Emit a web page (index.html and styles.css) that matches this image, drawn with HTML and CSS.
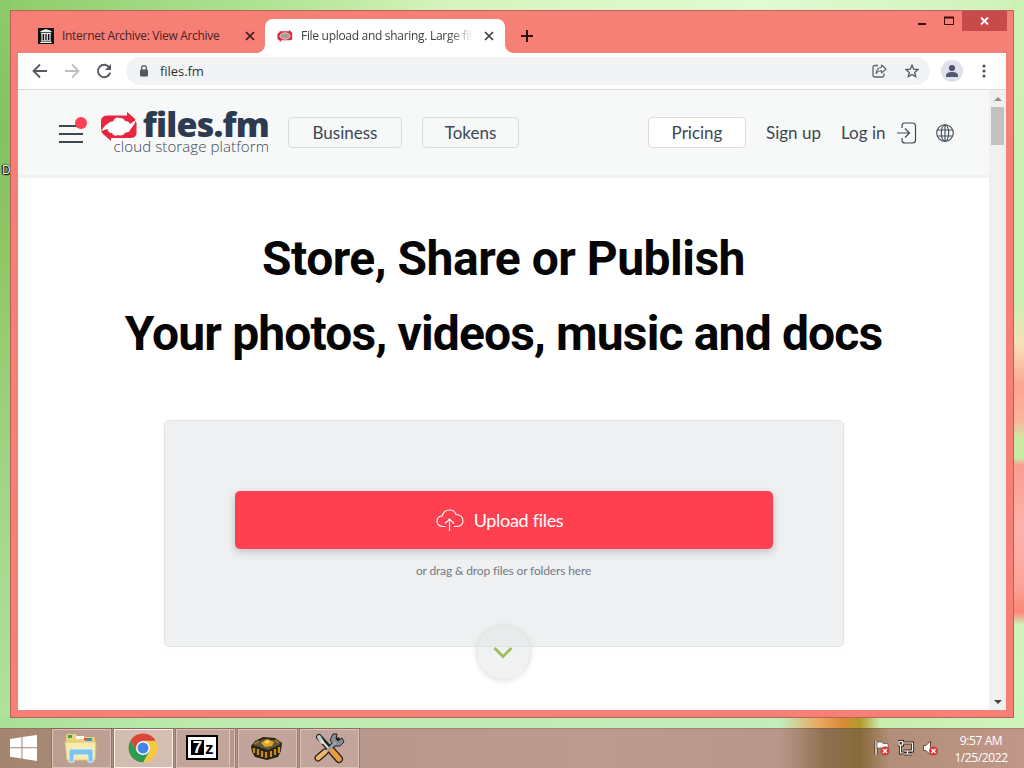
FILE: index.html
```
<!DOCTYPE html>
<html lang="en">
<head>
  <meta charset="UTF-8">
  <title>File upload and sharing</title>
  <link rel="stylesheet" href="styles.css">
</head>
<body>
  <span class="desktop-label">D</span>

  <div class="window">
    <div class="titlebar">
      <div class="tab">
        <svg class="favicon" width="16" height="16" viewBox="0 0 16 16">
          <rect width="16" height="16" fill="#111"/>
          <path d="M8 1l5.5 2v1.3h-11V3zM3 5h10v1H3zM3 12.3h10v1H3zM2.3 13.8h11.4v1.2H2.3z" fill="#eee"/>
          <path d="M4 6v6.3M6.7 6v6.3M9.3 6v6.3M12 6v6.3" stroke="#ddd" stroke-width="1.3"/>
        </svg>
        <span class="tab-title">Internet Archive: View Archive</span>
        <svg class="tab-close" width="10" height="10" viewBox="0 0 10 10"><path d="M1 1l8 8M9 1l-8 8" stroke="#3b1a18" stroke-width="1.7"/></svg>
      </div>
      <div class="tab active">
        <svg class="favicon" width="16" height="16" viewBox="0 0 38 32">
          <path d="M5 8Q5 5 9 5h20V1l7 7v14q0 4-4 4H10v4l-9-7V12q0-4 4-4z" fill="#d92b40"/>
          <ellipse cx="19" cy="16" rx="12" ry="7.5" fill="#a89d94" stroke="#f3d5d5" stroke-width="2"/>
        </svg>
        <span class="tab-title faded">File upload and sharing. Large fil</span>
        <svg class="tab-close" width="10" height="10" viewBox="0 0 10 10"><path d="M1 1l8 8M9 1l-8 8" stroke="#3c4043" stroke-width="1.7"/></svg>
      </div>
      <svg class="new-tab" width="12" height="12" viewBox="0 0 12 12"><path d="M6 0v12M0 6h12" stroke="#2e0f0d" stroke-width="2"/></svg>
      <div class="controls">
        <svg class="minimize" width="9" height="10" viewBox="0 0 9 10"><path d="M0 8h8" stroke="#3c0b08" stroke-width="2"/></svg>
        <svg class="maximize" width="10" height="10" viewBox="0 0 10 10"><path d="M.5 1v7.5h9V1" fill="none" stroke="#3c0b08"/><path d="M0 1.5h10" stroke="#3c0b08" stroke-width="2"/></svg>
        <span class="close">
          <svg width="9" height="8" viewBox="0 0 9 8"><path d="M1 .5l7 7M8 .5l-7 7" stroke="#fff" stroke-width="1.8"/></svg>
        </span>
      </div>
    </div>

    <div class="toolbar">
      <svg class="back" width="16" height="16" viewBox="0 0 16 16"><path d="M15 8H2M8 1.5L1.5 8 8 14.5" fill="none" stroke="#55585c" stroke-width="1.8"/></svg>
      <svg class="forward" width="16" height="16" viewBox="0 0 16 16"><path d="M1 8h13M8 1.5L14.5 8 8 14.5" fill="none" stroke="#bdbfc2" stroke-width="1.8"/></svg>
      <svg class="reload" width="16" height="16" viewBox="0 0 16 16"><path d="M13.3 4.5A6.2 6.2 0 1 0 14.2 9.5" fill="none" stroke="#55585c" stroke-width="1.9"/><path d="M15 1v6H9z" fill="#55585c"/></svg>
      <div class="address">
        <svg width="10" height="12" viewBox="0 0 10 12"><rect x="1" y="4.5" width="8" height="7" rx="1" fill="#55585c"/><path d="M2.7 5V3a2.3 2.3 0 0 1 4.6 0v2" fill="none" stroke="#55585c" stroke-width="1.3"/></svg>
        <span class="url">files.fm</span>
        <svg class="share" width="15" height="14" viewBox="0 0 15 14"><path d="M6 1.5H3Q1 1.5 1 3.5V11q0 2 2 2h7q2 0 2-2V9.5" fill="none" stroke="#606367" stroke-width="1.3"/><path d="M9.5 1l4.5 4-4.5 4V6.8Q5.8 6.7 4.2 9.5 4.5 4 9.5 3.3z" fill="none" stroke="#606367" stroke-width="1.1" stroke-linejoin="round"/></svg>
        <svg class="star" width="14" height="14" viewBox="0 0 14 14"><path d="M7 1.3l1.7 3.9 4.2.4-3.2 2.8 1 4.2L7 10.4l-3.7 2.2 1-4.2L1.1 5.6l4.2-.4z" fill="none" stroke="#55585c" stroke-width="1.3"/></svg>
      </div>
      <svg class="avatar" width="22" height="22" viewBox="0 0 22 22"><circle cx="11" cy="11" r="11" fill="#dfe1ec"/><circle cx="11" cy="8" r="3.1" fill="#50566b"/><path d="M5 17v-1.5Q5 12 11 12t6 3.5V17z" fill="#50566b"/></svg>
      <svg class="more" width="4" height="14" viewBox="0 0 4 14"><g fill="#505357"><circle cx="2" cy="2" r="1.6"/><circle cx="2" cy="7" r="1.6"/><circle cx="2" cy="12" r="1.6"/></g></svg>
    </div>

    <div class="viewport">
      <div class="page">
        <header class="header">
          <div class="menu">
            <i></i><i></i><i></i>
            <b class="menu-dot"></b>
          </div>
          <div class="logo">
            <svg class="logo-mark" width="38" height="30" viewBox="0 0 38 30">
              <path d="M8 3.5h19V0l7 6q2.5 2 2.5 5v10q0 5-6 5H11V29l-8-7Q1 20 1 17V9q0-5.500 7-5.500z" fill="#e8263f"/>
              <path d="M1 19q4-6 6.5-7 2-3 5.5-2.5Q15.5 4 20 6q4 0 5 3 4 0 5 3l6.5-4.5Q33 15 30.5 17q-1 4-5 3.5-3 4.500-7.500 2.500-4.500 2-6-2-4 0-4.500-4z" fill="#fff"/>
            </svg>
            <div class="logo-text">
              <span class="logo-name">files.fm</span>
              <span class="logo-tagline">cloud storage platform</span>
            </div>
          </div>
          <a class="button business">Business</a>
          <a class="button tokens">Tokens</a>
          <a class="button pricing">Pricing</a>
          <a class="link signup">Sign up</a>
          <a class="link login">Log in</a>
          <svg class="login-icon" width="20" height="22" viewBox="0 0 20 22"><path d="M5 6V4q0-3 3-3h7.5q3 0 3 3v14q0 3-3 3H8q-3 0-3-3v-2M0 11h12M8 6.5l4.5 4.5L8 15.5" fill="none" stroke="#3d4956" stroke-width="1.2"/></svg>
          <svg class="globe" width="18" height="18" viewBox="0 0 18 18"><g fill="none" stroke="#3d4956" stroke-width="1.1"><circle cx="9" cy="9" r="8.3"/><ellipse cx="9" cy="9" rx="3.7" ry="8.3"/><path d="M9 1v16M1.5 6h15M1.5 12h15"/></g></svg>
        </header>

        <main class="hero">
          <h1><span class="line-1">Store, Share or Publish</span><br><span class="line-2">Your photos, videos, music and docs</span></h1>
          <section class="dropzone">
            <a class="upload">
              <svg width="28" height="23" viewBox="0 0 28 23"><path d="M9.5 17.5H7Q1 17 1 12q0-4.500 5-5Q8 1 13.500 1q5 0 6.500 4.500 7 .5 7 6.500 0 5-6 5.500h-3M13.500 22V10M9 14.500l4.500-4.500 4.500 4.500" fill="none" stroke="#fff" stroke-width="1.1"/></svg>
              <span>Upload files</span>
            </a>
            <p class="hint">or drag &amp; drop files or folders here</p>
            <div class="more-circle">
              <svg width="20" height="13" viewBox="0 0 20 13"><path d="M1.5 2L10 10.5 18.5 2" fill="none" stroke="#9dc158" stroke-width="3"/></svg>
            </div>
          </section>
        </main>
      </div>
      <div class="scrollbar">
        <i class="arrow-up"></i>
        <i class="thumb"></i>
        <i class="arrow-down"></i>
      </div>
    </div>
  </div>

  <footer class="taskbar">
    <div class="start">
      <svg width="28" height="26" viewBox="0 0 28 26"><path d="M0 4l11.5-1.7v10H0zM12.5 2.1L27 0v12.3H12.5zM0 13.3h11.5v10.2L0 21.8zM12.5 13.3H27V26l-14.5-2.3z" fill="#fff"/></svg>
    </div>
    <div class="task">
      <svg width="34" height="30" viewBox="0 0 34 30">
        <path d="M2 3q0-2 2-2h8l2 3h15q2 0 2 2v20H2z" fill="#e8d27a"/>
        <path d="M4 2h4v3H4z" fill="#4aa14c"/><path d="M12 3h8v3h-8z" fill="#fff"/><path d="M21 5h7v3h-7z" fill="#4b8ed0"/><path d="M20 5h3v2h-3z" fill="#d55c43"/>
        <path d="M1 9h31l-1 18H3z" fill="#f7ebab" stroke="#dcc973"/>
        <path d="M5 29V18q0-2 2-2h20q2 0 2 2v11h-5v-7H10v7z" fill="#7fc3ed" stroke="#d9f0fb"/>
      </svg>
    </div>
    <div class="task current">
      <svg width="30" height="30" viewBox="0 0 30 30">
        <circle cx="15" cy="15" r="14.5" fill="#f7c844"/>
        <path d="M2.4 7.8A14.5 14.5 0 0 1 27.6 7.8H15L8.8 18.6z" fill="#d8473a"/>
        <path d="M2.4 7.8A14.5 14.5 0 0 0 15 29.5l6.300-10.900H8.700z" fill="#2f9a55"/>
        <circle cx="15" cy="15" r="7" fill="#fff"/><circle cx="15" cy="15" r="5.5" fill="#4386e8"/>
      </svg>
    </div>
    <div class="task stacked">
      <div class="sevenzip"><b>7</b><span>z</span></div>
    </div>
    <div class="task">
      <svg width="34" height="26" viewBox="0 0 34 26">
        <path d="M1 11L5 6l8-4 12 1 7 5-1 8-3 6-11 3-12-3-3-5z" fill="#2b2416"/>
        <path d="M3 10l10-6 12 1 6 4-13 6z" fill="#5d5540"/>
        <path d="M4 13v5M8 14v6M12 16v6M16 17v6M21 16v6M25 14v6M29 12v6" stroke="#c98a1a" stroke-width="2.2"/>
        <path d="M11 8l6-4 7 3-2 4-7 1z" fill="#e7a321"/><path d="M14 7l4-2 2 2-3 2z" fill="#ffd85e"/>
        <path d="M4 9l5-3M25 5l4 3" stroke="#9c7a2a" stroke-width="2"/>
      </svg>
    </div>
    <div class="task">
      <svg width="32" height="32" viewBox="0 0 32 32">
        <g fill="none" stroke="#222" stroke-linecap="round"><path d="M6 5l11 12" stroke-width="6"/><path d="M18 18l8 9" stroke-width="8"/><path d="M25 8L14 19" stroke-width="5"/><path d="M12 20l-7 6" stroke-width="7"/></g>
        <path d="M20 2l-3 6 4 6h6l4-4-2-4-4 3-2-2 1-5z" fill="#858d96" stroke="#222"/>
        <g fill="none" stroke-linecap="round"><path d="M6 5l3 5" stroke="#bfcbc8" stroke-width="4"/><path d="M9 9l8 9" stroke="#ddd" stroke-width="2"/><path d="M19 19l7 8" stroke="#e99b43" stroke-width="5.5"/><path d="M22 11l-8 8" stroke="#99a1aa" stroke-width="3"/><path d="M12 20l-7 6" stroke="#f0b568" stroke-width="4.5"/></g>
      </svg>
    </div>
    <div class="tray">
      <svg width="16" height="16" viewBox="0 0 16 16"><path d="M2 1v14" stroke="#40241b" stroke-width="3"/><path d="M2 1v14" stroke="#fff" stroke-width="1.4"/><path d="M3 2h5l1 1.5h5V9H9L8 8H3z" fill="#fff" stroke="#65483c" stroke-width=".7"/><circle cx="11" cy="11" r="4.5" fill="#cf3c39"/><path d="M9 9l4 4M13 9l-4 4" stroke="#fff" stroke-width="1.4"/></svg>
      <svg width="16" height="16" viewBox="0 0 16 16"><path d="M4.5 3h10v8h-9M9.5 11v3M6 14h8M2.5 5v8h3M1 1.5h3.5V5H1z" fill="none" stroke="#40241b" stroke-width="3"/><path d="M4.5 3h10v8h-9M9.5 11v3M6 14h8M2.5 5v8h3M1 1.5h3.5V5H1z" fill="none" stroke="#fff" stroke-width="1.2"/></svg>
      <svg width="16" height="16" viewBox="0 0 16 16"><path d="M1.5 5.5H4L8.5 1v14L4 10.5H1.5z" fill="#fff" stroke="#65483c"/><circle cx="11.5" cy="11" r="4.5" fill="#cf3c39"/><path d="M9.5 9l4 4M13.5 9l-4 4" stroke="#fff" stroke-width="1.4"/></svg>
    </div>
    <div class="clock"><span class="time">9:57 AM</span><span class="date">1/25/2022</span></div>
  </footer>
</body>
</html>
```
FILE: styles.css
```
* {
  box-sizing: border-box;
}

body {
  margin: 0;
  width: 1024px;
  height: 768px;
  overflow: hidden;
  display: flex;
  flex-direction: column;
  position: relative;
  font-family: "Open Sans", sans-serif;
  background:
    linear-gradient(to bottom, #cdf0b5 0, #c9efb4 300px, #f8dfb8 345px, #fba493 385px, #fbb59a 420px, #c8eca5 440px, #c8eca5 458px, #fa9e90 465px, #fdb3aa 530px, #fca49b 585px, #fa8675 612px, #d0f3bb 625px, #cdf5bd 768px) right / 12px 768px no-repeat,
    linear-gradient(to right, #a8e098 0, #bdebae 200px, #c2eebd 780px, #e9a65e 820px, #d78a37 843px, #b09b27 860px, #c9edae 880px, #cdf5bd 1024px) 0 716px / 1024px 12px no-repeat,
    linear-gradient(to bottom, #8dcc69 0, #83c261 130px, #91c765 260px, #a3d687 500px, #b0e69f 768px) left / 11px 768px no-repeat,
    linear-gradient(to right, #8dcc69 0, #b5e69a 300px, #d6f4bd 450px, #e1fad2 760px, #cef2b9 1024px);
}

svg,
i,
b {
  display: block;
  flex: none;
}

/* label of an icon hidden behind the window */
.desktop-label {
  position: absolute;
  left: 2px;
  top: 162px;
  font-size: 12px;
  line-height: 16px;
  color: #fff;
  text-shadow: 0 0 1px #000, 1px 1px 1px #000, -1px 0 1px #000, 0 0 2px #000;
}

.window {
  position: relative;
  width: 1004px;
  height: 708px;
  margin-left: 10px;
  margin-top: 10px;
  padding: 0 7px 7px;
  border: 1px solid #b9605a;
  background: #f67f76;
  flex: none;
}

.titlebar {
  display: flex;
  height: 42px;
  align-items: flex-end;
  padding-left: 8px;
}

.tab {
  display: flex;
  align-items: center;
  width: 239px;
  height: 34px;
  padding: 0 10px 0 12px;
  font-size: 12px;
  color: #4c211f;
}

.tab.active {
  position: relative;
  width: 240px;
  padding-right: 11px;
  background: #fff;
  border-radius: 8px 8px 0 0;
  color: #3c4043;
}

.tab.active::before,
.tab.active::after {
  content: "";
  position: absolute;
  bottom: 0;
  width: 8px;
  height: 8px;
}

.tab.active::before {
  left: -8px;
  background: radial-gradient(circle at 0 0, transparent 7.5px, #fff 8px);
}

.tab.active::after {
  right: -8px;
  background: radial-gradient(circle at 100% 0, transparent 7.5px, #fff 8px);
}

.tab-title {
  flex: 1;
  margin: -1px 10px 0 8px;
  white-space: nowrap;
  overflow: hidden;
  letter-spacing: -.3px;
}

.tab-title.faded {
  -webkit-mask-image: linear-gradient(to right, #000 85%, transparent);
  mask-image: linear-gradient(to right, #000 85%, transparent);
}

.new-tab {
  margin: 0 0 11px 16px;
}

.controls {
  display: flex;
  align-self: flex-start;
  margin-left: auto;
  margin-right: -1px;
}

.minimize {
  margin: 5px 17px 0 0;
}

.maximize {
  margin: 5px 8px 0 0;
}

.close {
  display: flex;
  align-items: center;
  justify-content: center;
  width: 45px;
  height: 20px;
  background: #c84b4c;
}

.toolbar {
  display: flex;
  align-items: center;
  height: 37px;
  padding: 0 20px 0 14px;
  background: #fff;
  border-bottom: 1px solid #d8dadc;
}

.forward {
  margin: 0 16px;
}

.address {
  display: flex;
  align-items: center;
  width: 804px;
  height: 28px;
  margin-left: 13px;
  padding: 0 11px 0 13px;
  border-radius: 14px;
  background: #f1f3f4;
}

.reload {
  margin-right: 1px;
}

.url {
  margin-left: 11px;
  font-size: 13px;
  letter-spacing: -.05px;
  color: #333;
}

.share {
  margin-left: auto;
}

.star {
  margin-left: 18px;
}

.avatar {
  margin-left: 11px;
}

.more {
  margin-left: auto;
}

.viewport {
  display: flex;
  height: 620px;
  background: #fff;
}

.page {
  width: 971px;
}

.scrollbar {
  display: flex;
  flex-direction: column;
  align-items: center;
  width: 17px;
  padding: 7px 0 6px;
  background: #f0f0f0;
}

.arrow-up {
  border: 4px solid transparent;
  border-top: 0;
  border-bottom-color: #8d8d8d;
}

.thumb {
  width: 13px;
  height: 38px;
  margin-top: 6px;
  background: #c1c1c1;
}

.arrow-down {
  margin-top: auto;
  border: 4px solid transparent;
  border-bottom: 0;
  border-top-color: #444;
}

.header {
  display: flex;
  align-items: center;
  height: 88px;
  padding: 0 35px 0 41px;
  background: #f7f8f8;
  border-bottom: 3px solid #f0f1f1;
  font-family: Lato, sans-serif;
  color: #3b4754;
}

.menu {
  position: relative;
  width: 24px;
  height: 18px;
  margin-top: 3px;
  display: flex;
  flex-direction: column;
  justify-content: space-between;
}

.menu i {
  height: 2px;
  background: #3b4754;
}

.menu-dot {
  position: absolute;
  right: -4px;
  top: -8px;
  width: 12px;
  height: 12px;
  border-radius: 50%;
  background: #fb4056;
}

.logo {
  display: flex;
  width: 169px;
  height: 54px;
  margin-left: 17px;
  padding-top: 6px;
}

.logo-text {
  display: flex;
  flex-direction: column;
  align-items: flex-end;
  width: 131px;
  height: 50px;
  margin-top: -3px;
  white-space: nowrap;
}

.logo-name {
  font: 800 34px/30px "Open Sans", sans-serif;
  letter-spacing: -.8px;
  color: #2c3b50;
}

.logo-tagline {
  font: 300 15px/15px "Open Sans", sans-serif;
  letter-spacing: .1px;
}

.button {
  display: flex;
  align-items: center;
  justify-content: center;
  height: 31px;
  border: 1px solid #d9dde0;
  border-radius: 4px;
  font-size: 17px;
}

.business {
  width: 114px;
  margin-left: 19px;
}

.tokens {
  width: 97px;
  margin-left: 20px;
}

.pricing {
  width: 98px;
  margin-left: auto;
  background: #fff;
}

.link {
  font-size: 17px;
  white-space: nowrap;
}

.signup {
  width: 55px;
  margin-left: 20px;
}

.login {
  width: 45px;
  margin-left: 20px;
}

.login-icon {
  margin-left: 11px;
}

.globe {
  margin-left: 19px;
}

.hero {
  display: flex;
  flex-direction: column;
  align-items: center;
}

h1 {
  margin: 43px 0 0;
  font: 700 48px/75px Roboto, sans-serif;
  text-align: center;
  white-space: nowrap;
  color: #050505;
}

.line-1 {
  letter-spacing: -.5px;
}

.line-2 {
  letter-spacing: -.85px;
}

.dropzone {
  position: relative;
  width: 680px;
  height: 227px;
  margin-top: 49px;
  padding: 70px;
  border: 1px solid #dfe3e4;
  border-radius: 5px;
  background: #eef0f2;
  box-shadow: 0 4px 12px rgba(0, 0, 0, .02);
}

.upload {
  display: flex;
  align-items: center;
  justify-content: center;
  gap: 10px;
  height: 58px;
  padding-right: 8px;
  border-radius: 5px;
  background: #ff4051;
  box-shadow: 0 3px 8px rgba(0, 0, 0, .2);
  font: 18px Lato, sans-serif;
  letter-spacing: -.3px;
  color: #fff;
}

.hint {
  margin: 13px 0 0;
  font: 12px/18px Lato, sans-serif;
  letter-spacing: -.15px;
  text-align: center;
  color: #747b80;
}

.more-circle {
  position: absolute;
  left: 311px;
  bottom: -34px;
  display: flex;
  align-items: center;
  justify-content: center;
  width: 55px;
  height: 55px;
  border-radius: 50%;
  border: 1px solid #e5e7e5;
  background: linear-gradient(rgba(232, 235, 235, .9) 20px, #dfe2e3 20px, #dfe2e3 21px, rgba(240, 241, 242, .95) 21px);
  box-shadow: 0 1px 5px rgba(80, 90, 40, .16);
}

.taskbar {
  display: flex;
  height: 40px;
  margin-top: 10px;
  flex: none;
  background: linear-gradient(to right, #a3846e 0, #b6968a 200px, #bd9a8f 600px, #b8978a 780px, #8e7150 825px, #876a38 860px, #b28f7a 890px, #b9937f 960px, #c2968b 1024px);
  box-shadow: inset 0 1px 0 rgba(90, 60, 45, .25);
}

.start {
  width: 52px;
  padding: 7px 0 0 10px;
}

.task {
  display: flex;
  align-items: center;
  justify-content: center;
  width: 59px;
  height: 39px;
  margin-right: 3px;
  margin-top: 1px;
  padding: 0 2px 2px 0;
  border: 1px solid #d8c2b9;
  background: rgba(206, 178, 172, .5);
  box-shadow: 0 0 0 1px rgba(90, 60, 50, .3);
}

.task.current {
  border-color: #fff3ea;
  background: rgba(226, 203, 195, .75);
}

.task.stacked {
  padding-right: 7px;
  box-shadow: inset -4px 0 0 #b7968a, inset -5px 0 0 #dac5bc, 0 0 0 1px rgba(90, 60, 50, .3);
}

.sevenzip {
  display: flex;
  width: 32px;
  height: 25px;
  padding: 3px;
  border: 2px solid #000;
  background: #fff;
  font: 700 17px/15px "Liberation Sans", sans-serif;
}

.sevenzip b {
  width: 13px;
  text-align: center;
  color: #fff;
  background: #000;
}

.sevenzip span {
  padding-left: 1px;
  line-height: 17px;
}

.tray {
  display: flex;
  align-items: center;
  gap: 8px;
  margin-left: auto;
  margin-right: 16px;
}

.clock {
  display: flex;
  flex-direction: column;
  align-items: center;
  width: 54px;
  margin-right: 16px;
  padding-top: 4px;
  font-size: 12px;
  line-height: 17px;
  letter-spacing: -.4px;
  white-space: nowrap;
  color: #fff;
}
```
